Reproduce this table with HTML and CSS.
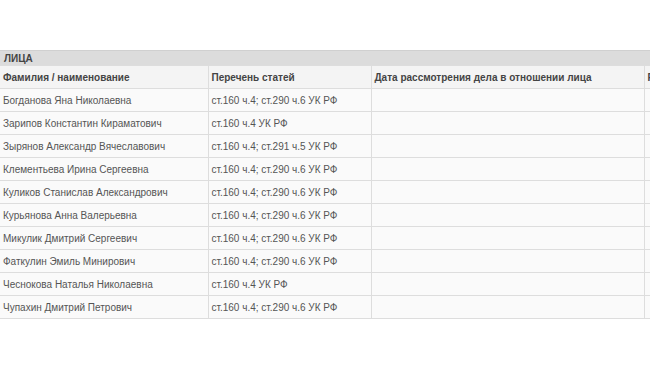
FILE: index.html
```html
<!DOCTYPE html>
<html lang="ru">
<head>
<meta charset="utf-8">
<title>Лица</title>
<link rel="stylesheet" href="styles.css">
</head>
<body>
<div class="wrap">
  <div class="section-title">ЛИЦА</div>
  <table class="grid">
    <colgroup>
      <col class="c1"><col class="c2"><col class="c3"><col class="c4">
    </colgroup>
    <thead>
      <tr>
        <th>Фамилия / наименование</th>
        <th>Перечень статей</th>
        <th>Дата рассмотрения дела в отношении лица</th>
        <th>Результат</th>
      </tr>
    </thead>
    <tbody>
      <tr><td>Богданова Яна Николаевна</td><td>ст.160 ч.4; ст.290 ч.6 УК РФ</td><td></td><td></td></tr>
      <tr><td>Зарипов Константин Кираматович</td><td>ст.160 ч.4 УК РФ</td><td></td><td></td></tr>
      <tr><td>Зырянов Александр Вячеславович</td><td>ст.160 ч.4; ст.291 ч.5 УК РФ</td><td></td><td></td></tr>
      <tr><td>Клементьева Ирина Сергеевна</td><td>ст.160 ч.4; ст.290 ч.6 УК РФ</td><td></td><td></td></tr>
      <tr><td>Куликов Станислав Александрович</td><td>ст.160 ч.4; ст.290 ч.6 УК РФ</td><td></td><td></td></tr>
      <tr><td>Курьянова Анна Валерьевна</td><td>ст.160 ч.4; ст.290 ч.6 УК РФ</td><td></td><td></td></tr>
      <tr><td>Микулик Дмитрий Сергеевич</td><td>ст.160 ч.4; ст.290 ч.6 УК РФ</td><td></td><td></td></tr>
      <tr><td>Фаткулин Эмиль Минирович</td><td>ст.160 ч.4; ст.290 ч.6 УК РФ</td><td></td><td></td></tr>
      <tr><td>Чеснокова Наталья Николаевна</td><td>ст.160 ч.4 УК РФ</td><td></td><td></td></tr>
      <tr><td>Чупахин Дмитрий Петрович</td><td>ст.160 ч.4; ст.290 ч.6 УК РФ</td><td></td><td></td></tr>
    </tbody>
  </table>
</div>
</body>
</html>
```
FILE: styles.css
```css
html, body {
  margin: 0;
  padding: 0;
  background: #ffffff;
  overflow: hidden;
}
body {
  font-family: "Liberation Sans", Arial, sans-serif;
  font-size: 10px;
  color: #555555;
}
.wrap {
  padding-top: 50px;
  width: 800px;
}
.section-title {
  height: 14px;
  line-height: 15px;
  background: #dcdcdc;
  border-top: 1px solid #d0d0d0;
  font-weight: bold;
  color: #444444;
  padding-left: 4px;
  font-size: 10px;
}
.grid {
  border-collapse: collapse;
  table-layout: fixed;
  width: 800px;
}
.c1 { width: 208px; }
.c2 { width: 163px; }
.c3 { width: 273px; }
.c4 { width: 156px; }
.grid th, .grid td {
  border: 1px solid #dddddd;
  height: 22px;
  padding: 0 0 0 3px;
  text-align: left;
  vertical-align: middle;
  white-space: nowrap;
  overflow: hidden;
}
.grid th {
  height: 22px;
  background: #f4f4f4;
  font-weight: bold;
  color: #444444;
  font-size: 10px;
}
.grid td {
  background: #fafafa;
}
.grid tr > :first-child {
  border-left: none;
}
```
